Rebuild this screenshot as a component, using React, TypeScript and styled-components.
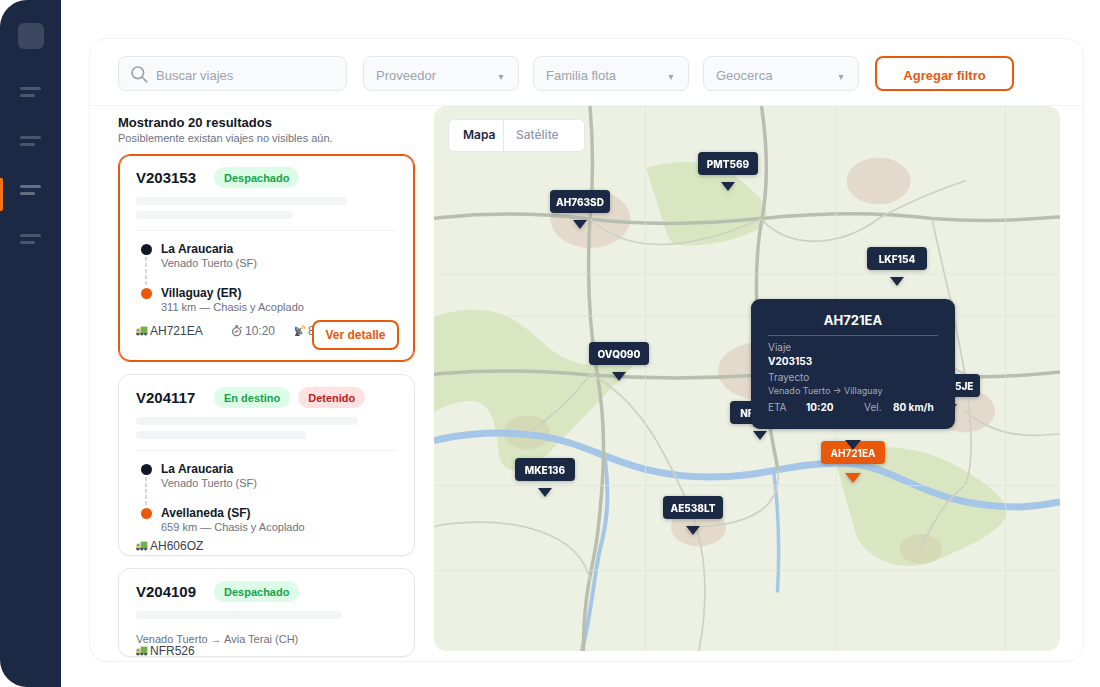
import React from "react";
import styled, { createGlobalStyle, css } from "styled-components";

const navy = "#1b2944";
const orange = "#ea580c";
const ink = "#111827";
const muted = "#6b7280";
const faint = "#9ca3af";
const line = "#e5e7eb";
const sans = `"Liberation Sans", Arial, sans-serif`;
const inter = `Inter, "Liberation Sans", sans-serif`;

const GlobalStyle = createGlobalStyle`
  *, *::before, *::after { box-sizing: border-box; }
  body { margin: 0; background: #fff; font-family: ${sans}; color: ${ink}; }
  button, input, select { font: inherit; color: inherit; margin: 0; }
  h1, h2, h3, p, ul, dl, dd { margin: 0; padding: 0; }
  ul { list-style: none; }
`;

const Shell = styled.div`
  display: flex;
  min-height: 100vh;
`;

const Sidebar = styled.nav`
  flex: 0 0 61px;
  display: flex;
  flex-direction: column;
  align-items: stretch;
  padding-top: 23px;
  background: ${navy};
  border-radius: 27px 0 0 27px;
  overflow: hidden;
`;

const Logo = styled.div`
  width: 26px;
  height: 26px;
  margin: 0 18px 26px;
  border-radius: 6px;
  background: rgba(255, 255, 255, 0.15);
`;

const NavButton = styled.button<{ $active?: boolean }>`
  position: relative;
  display: flex;
  flex-direction: column;
  justify-content: center;
  gap: 4px;
  height: 33px;
  margin-bottom: 16px;
  padding: 0 20px;
  border: 0;
  background: none;
  opacity: ${(p) => (p.$active ? 1 : 0.66)};

  &::before, &::after {
    content: "";
    width: 21px;
    height: 3px;
    border-radius: 2px;
    background: rgba(255, 255, 255, 0.32);
  }
  &::after { width: 15px; }
`;

const ActiveMark = styled.span`
  position: absolute;
  left: 0;
  top: 5px;
  width: 3px;
  height: 33px;
  border-radius: 0 2px 2px 0;
  background: #f97316;
`;

const Main = styled.main`
  flex: 1;
  min-width: 0;
  display: flex;
  padding: 38px 16px 25px 28px;
`;

const Panel = styled.section`
  flex: 1;
  min-width: 0;
  display: flex;
  flex-direction: column;
  border: 1px solid #f1f2f4;
  border-radius: 18px;
`;

const Toolbar = styled.form`
  display: flex;
  gap: 16px;
  padding: 17px 28px 14px;
  border-bottom: 1px solid #f1f2f4;
`;

const SearchBox = styled.label`
  flex: 0 1 229px;
  min-width: 0;
  height: 35px;
  display: flex;
  align-items: center;
  gap: 8px;
  padding: 2px 12px 0;
  border: 1px solid ${line};
  border-radius: 8px;
  background: #f9fafb;
`;

const SearchInput = styled.input`
  flex: 1;
  min-width: 0;
  padding: 2px 0 0;
  border: 0;
  outline: 0;
  background: none;
  font-size: 13px;
  &::placeholder { color: ${faint}; opacity: 1; }
`;

const Filters = styled.div`
  display: flex;
  gap: 14px;
  min-width: 0;
`;

const SelectBox = styled.div`
  position: relative;
  flex: 0 1 156px;
  min-width: 0;
`;

const Select = styled.select`
  width: 156px;
  max-width: 100%;
  height: 35px;
  padding: 4px 24px 0 12px;
  border: 1px solid ${line};
  border-radius: 8px;
  background: #f9fafb;
  color: ${faint};
  font-size: 13px;
  appearance: none;
`;

const Caret = styled.svg`
  position: absolute;
  right: 15px;
  top: 19px;
  pointer-events: none;
`;

const OutlineButton = styled.button<{ $small?: boolean }>`
  border: 2px solid ${orange};
  border-radius: 8px;
  background: #fff;
  color: ${orange};
  font-weight: 700;
  ${(p) =>
    p.$small
      ? css`
          position: absolute;
          right: 15px;
          bottom: 11px;
          width: 87px;
          height: 30px;
          font-size: 12px;
        `
      : css`
          flex: 0 0 139px;
          height: 35px;
          padding-top: 4px;
          font-size: 13px;
        `}
`;

const Body = styled.div`
  flex: 1;
  display: flex;
  gap: 19px;
  padding: 0 23px 0 28px;
`;

const List = styled.div`
  flex: 0 0 297px;
  padding: 9px 0 4px;
`;

const ListTitle = styled.h1`
  font-size: 13px;
  line-height: 16px;
`;

const ListNote = styled.p`
  margin-bottom: 9px;
  font-size: 11px;
  line-height: 14px;
  color: ${muted};
`;

const Cards = styled.ul`
  display: flex;
  flex-direction: column;
  gap: 12px;
`;

const Card = styled.li<{ $selected?: boolean; $bottom: number }>`
  position: relative;
  padding: 12px 17px ${(p) => p.$bottom}px;
  border: 1px solid ${(p) => (p.$selected ? orange : line)};
  border-radius: 12px;
  background: #fff;
  box-shadow: ${(p) =>
    p.$selected ? `inset 0 0 0 1px ${orange}` : "0 1px 1px rgba(17, 24, 39, 0.04)"};
`;

const CardHead = styled.div`
  display: flex;
  align-items: center;
  height: 21px;
  gap: 8px;
  margin-bottom: 9px;
`;

const TripId = styled.h2`
  flex: 0 0 70px;
  font-size: 15px;
  line-height: 21px;
`;

const Badge = styled.span<{ $danger?: boolean }>`
  padding: 1px 10px 0;
  border-radius: 11px;
  font-size: 11px;
  font-weight: 700;
  line-height: 20px;
  color: ${(p) => (p.$danger ? "#b91c1c" : "#16a34a")};
  background: ${(p) => (p.$danger ? "#fee2e2" : "#dcfce7")};
`;

const Skeleton = styled.div<{ $width: number }>`
  width: ${(p) => p.$width}%;
  height: 8px;
  border-radius: 4px;
  background: #f3f4f6;
  & + & { margin-top: 6px; }
`;

const Stops = styled.ul`
  margin-top: 11px;
  padding-top: 11px;
  border-top: 1px solid #f3f4f6;
`;

const Stop = styled.li`
  display: flex;
  gap: 5px;
  &:not(:last-child) > div:last-child { padding-bottom: 16px; }
`;

const Track = styled.div`
  flex: 0 0 20px;
  display: flex;
  flex-direction: column;
  align-items: center;
  padding-top: 2px;
`;

const Dot = styled.span<{ $end?: boolean }>`
  width: 11px;
  height: 11px;
  border-radius: 50%;
  background: ${(p) => (p.$end ? orange : ink)};
`;

const Dashes = styled.span`
  flex: 1;
  width: 2px;
  margin-top: 2px;
  background: repeating-linear-gradient(#d5d8de 0 4px, transparent 4px 6px);
`;

const StopName = styled.h3`
  font-size: 12px;
  line-height: 14px;
`;

const Detail = styled.p`
  font-size: 11px;
  line-height: 14px;
  color: ${muted};
`;

const RouteLine = styled(Detail)`
  margin-top: 13px;
`;

const Meta = styled.div<{ $top: number; $line: number }>`
  display: flex;
  margin-top: ${(p) => p.$top}px;
  font-size: 12px;
  line-height: ${(p) => p.$line}px;
  color: ${muted};
  white-space: nowrap;
`;

const MetaItem = styled.span<{ $width?: number; $strong?: boolean }>`
  display: flex;
  align-items: center;
  gap: 2px;
  flex: 0 0 ${(p) => (p.$width ? `${p.$width}px` : "auto")};
  color: ${(p) => (p.$strong ? "#374151" : muted)};
`;

const MapArea = styled.section`
  position: relative;
  flex: 1;
  min-width: 0;
  margin-bottom: 10px;
  border-radius: 13px;
  overflow: hidden;
  background: #edf1e4;
  font-family: ${inter};
`;

const Terrain = styled.svg`
  position: absolute;
  inset: 0;
  width: 100%;
  height: 100%;
`;

const Toggle = styled.div`
  position: absolute;
  left: 14px;
  top: 13px;
  display: flex;
  width: 137px;
  height: 33px;
  border: 1px solid ${line};
  border-radius: 6px;
  background: #fff;
`;

const ToggleButton = styled.button<{ $on?: boolean }>`
  flex: ${(p) => (p.$on ? "0 0 55px" : "1")};
  padding: 0 ${(p) => (p.$on ? 0 : 12)}px 3px ${(p) => (p.$on ? 14 : 12)}px;
  border: 0;
  border-right: ${(p) => (p.$on ? `1px solid ${line}` : "0")};
  background: none;
  text-align: left;
  font-size: 12px;
  font-weight: ${(p) => (p.$on ? 600 : 500)};
  color: ${(p) => (p.$on ? navy : "#8f99aa")};
`;

const Pin = styled.button<{ $active?: boolean }>`
  position: absolute;
  transform: translateX(-50%);
  display: flex;
  flex-direction: column;
  align-items: center;
  gap: ${(p) => (p.$active ? 9 : 7)}px;
  padding: 0;
  border: 0;
  background: none;
  color: ${(p) => (p.$active ? orange : navy)};
  filter: drop-shadow(0 1px 2px rgba(0, 0, 0, 0.25));
`;

const Plate = styled.span<{ $active?: boolean }>`
  width: ${(p) => (p.$active ? 64 : 60)}px;
  height: 23px;
  border-radius: 4px;
  background: currentColor;
  font-size: 10px;
  font-weight: ${(p) => (p.$active ? 700 : 800)};
  line-height: 25px;
  text-align: center;
  & > b { color: #fff; font-weight: inherit; }
`;

const Arrow = styled.span<{ $size: number }>`
  border: ${(p) => p.$size}px solid transparent;
  border-top: ${(p) => p.$size + 2}px solid currentColor;
  border-bottom: 0;
`;

const Popup = styled.div`
  position: absolute;
  transform: translateX(-50%);
  display: flex;
  flex-direction: column;
  align-items: center;
  gap: 11px;
  color: ${navy};
`;

const PopupCard = styled.div`
  width: 204px;
  padding: 12px 17px 15px;
  border-radius: 9px;
  background: ${navy};
  color: #a3abb9;
  font-size: 10px;
  line-height: 14px;
  box-shadow: 0 1px 4px rgba(0, 0, 0, 0.3);
  & h2 {
    margin-bottom: 4px;
    padding-bottom: 5px;
    border-bottom: 1px solid rgba(255, 255, 255, 0.25);
    font-size: 13px;
    font-weight: 700;
    line-height: 19px;
    text-align: center;
    color: #fff;
  }
  & strong { color: #fff; font-weight: 700; }
`;

const Field = styled.div`
  margin-bottom: 2px;
  & > * { display: block; }
  & > small { font-size: 9px; }
`;

const Metrics = styled.div`
  display: grid;
  grid-template-columns: 38px 58px 29px auto;
`;

type Place = { id: string; x: number; y: number; active?: boolean };

const places: Place[] = [
  { id: "PMT569", x: 728, y: 152 },
  { id: "AH763SD", x: 580, y: 190 },
  { id: "LKF154", x: 897, y: 247 },
  { id: "OVQ090", x: 619, y: 342 },
  { id: "AD345JE", x: 950, y: 374 },
  { id: "NFR526", x: 760, y: 401 },
  { id: "MKE136", x: 545, y: 458 },
  { id: "AE538LT", x: 693, y: 496 },
  { id: "AH721EA", x: 853, y: 441, active: true },
];

// Map coordinates to a share of the map's own width and height.
const at = (x: number, y: number) => ({
  left: `${((x - 434) / 626) * 100}%`,
  top: `${((y - 106) / 545) * 100}%`,
});

const Glyph = styled.svg`
  flex: 0 0 12px;
`;

function Truck() {
  return (
    <Glyph width="12" height="10" viewBox="0 0 12 10" aria-hidden="true">
      <path d="M4.600.6h6.800v6.600H4.600Z" fill="#6fb14a" />
      <path d="M1 2.400h3.300v5.400H.2V4.900Z" fill="#f3c64b" />
      <path d="M1.200 3h1.900v2.100H.5Z" fill="#5b9bc9" />
      <path d="M0 6.900h11.500v1.300H0Z" fill="#6d7a80" />
      <g fill="#48545b">
        <circle cx="1.900" cy="8.300" r="1.300" />
        <circle cx="5.800" cy="8.300" r="1.300" />
        <circle cx="9.600" cy="8.300" r="1.300" />
      </g>
    </Glyph>
  );
}

function Stopwatch() {
  return (
    <Glyph width="12" height="12" viewBox="0 0 12 12" fill="none" aria-hidden="true">
      <path d="M4.300.9h2.700M5.600 1v1.500M9.400 2l1.200 1.100" stroke="#64727a" strokeWidth="1.300" />
      <circle cx="5.600" cy="6.700" r="4" fill="#f5f6f7" stroke="#75828a" strokeWidth="1.300" />
      <path d="M4.100 7.500L7.400 5.400" stroke="#d8463f" strokeWidth="1.100" />
    </Glyph>
  );
}

function Satellite() {
  return (
    <Glyph width="12" height="12" viewBox="0 0 12 12" fill="none" aria-hidden="true">
      <path d="M1.200 1.500C-.2 5.600 3.200 10 8.600 9.200Z" fill="#57666f" />
      <path d="M1.200 1.500C4 1.400 8.600 6 8.600 9.200C5.600 8.900 1.700 4.900 1.200 1.500Z" fill="#84939b" />
      <path d="M2.200 7.500L1 11h5L4.500 8.700Z" fill="#46545c" />
      <path d="M4.500 5.600L7.200 3.400" stroke="#46545c" strokeWidth="1.200" />
      <path d="M7.200 2.200Q8.700 2.400 8.900 4M7.700.5Q10.600.9 10.900 3.900" stroke="#f5b04c" strokeWidth="1.100" />
    </Glyph>
  );
}

function MapDrawing() {
  return (
    <Terrain viewBox="434 106 626 545" preserveAspectRatio="none" aria-hidden="true">
      <rect x="434" y="106" width="626" height="545" fill="#edf1e4" />
      <g fill="#dae6c2">
        <path d="M646 168Q700 153 735 176Q755 191 764 203Q772 222 755 231Q722 246 685 245.500Q671 246 667 235Z" />
        <path d="M434 317C456 308 490 306 512 319C543 336 552 364 596 365Q616 366 634 365L545 457Q528 470 512 470Q500 469 498 448C496 425 492 401 470 401Q453 401 434 412Z" />
        <path d="M832 449C880 445 905 446 935 456C965 468 1006 494 1007 511C1006 532 962 548 940 559C903 574 873 563 857 538Z" />
      </g>
      <g fill="#e3dacb">
        <ellipse cx="590.500" cy="219" rx="40" ry="29" />
        <ellipse cx="878.500" cy="181" rx="32" ry="23.500" />
        <ellipse cx="761" cy="371" rx="43" ry="29" />
        <ellipse cx="965" cy="411" rx="30" ry="21.500" />
        <ellipse cx="698.500" cy="527" rx="27.500" ry="19.500" />
      </g>
      <g fill="#d5d9b5">
        <ellipse cx="527" cy="432.500" rx="23" ry="17" />
        <ellipse cx="921" cy="549" rx="21" ry="15" />
      </g>
      <g fill="none" stroke="#a6c6e8">
        <path strokeWidth="7" d="M434 441L441 439C480 431 530 430 570 443C604 453 640 477 710 477C765 477 790 463 838 463C900 463 920 507 1020 507Q1040 506 1060 502" />
        <path strokeWidth="4" d="M605 459Q611 505 602 541C594 570 594 600 582 651" />
        <path strokeWidth="3.500" strokeLinecap="round" d="M774 474Q781 530 777.500 591" />
      </g>
      <g fill="none" stroke="#b9bfae" strokeWidth="3.500">
        <path d="M434 218.500L441 217.500Q516 210 590 219T761 218.500Q858 209 932 218.500Q990 223 1050 217.500L1060 217" />
        <path d="M434 374.500L441 373.500Q516 368 590 375Q675 381 761 375Q860 370 932 375.500Q990 379 1050 373L1060 372" />
        <path d="M590 106Q595 165 590 219C587 270 589 325 597 372C605 420 606 460 598 530C595 562 583 590 583.500 651" />
        <path d="M761.500 106Q771 170 762 219C754 260 755 320 762 375Q768 420 778 470" />
      </g>
      <g fill="none" stroke="#cdd1c5" strokeWidth="1.700">
        <path d="M590 219Q645 270 761 219C790 250 840 248 881 217Q920 196 966 180.500" />
        <path d="M932 219Q941 260 952 306L965 374Q977 460 965 485Q938 507 921 549" />
        <path d="M940 361L965 374M965 411Q998 440 1050 434.500L1060 434" />
        <path d="M434 526.500L441 525C515 515 580 533 590.500 581" />
        <path d="M527 432.500Q562 412 590.500 374C640 400 665 453 684 495Q716 560 699 651" />
        <path d="M698 527C745 525 782 510 778 470" />
      </g>
      <g fill="none" stroke="#dfe4d5" strokeWidth="1" opacity="0.7">
        <path d="M645.500 106V651M836 106V651M1005.500 106V651" />
        <path d="M434 274H1060M434 316H1060M434 485.500H1060M434 570.500H1060" />
      </g>
    </Terrain>
  );
}

function FilterSelect({ name }: { name: string }) {
  return (
    <SelectBox>
      <Select aria-label={name} defaultValue="">
        <option value="">{name}</option>
      </Select>
      <Caret width="6" height="5" viewBox="0 0 6 5" fill={faint}>
        <path d="M.5 0h5L3 5Z" />
      </Caret>
    </SelectBox>
  );
}

function Route({ from, fromNote, to, toNote }: Record<"from" | "fromNote" | "to" | "toNote", string>) {
  return (
    <Stops>
      <Stop>
        <Track>
          <Dot />
          <Dashes />
        </Track>
        <div>
          <StopName>{from}</StopName>
          <Detail>{fromNote}</Detail>
        </div>
      </Stop>
      <Stop>
        <Track>
          <Dot $end />
        </Track>
        <div>
          <StopName>{to}</StopName>
          <Detail>{toNote}</Detail>
        </div>
      </Stop>
    </Stops>
  );
}

export default function App() {
  return (
    <>
      <GlobalStyle />
      <Shell>
        <Sidebar aria-label="Principal">
          <Logo />
          <NavButton type="button" aria-label="Inicio" />
          <NavButton type="button" aria-label="Flota" />
          <NavButton type="button" aria-label="Viajes" $active>
            <ActiveMark />
          </NavButton>
          <NavButton type="button" aria-label="Informes" />
        </Sidebar>
        <Main>
          <Panel>
            <Toolbar onSubmit={(e) => e.preventDefault()}>
              <SearchBox>
                <svg width="17" height="17" viewBox="0 0 17 17" fill="none" stroke={faint} strokeWidth="1.700" strokeLinecap="round">
                  <circle cx="6.800" cy="6.800" r="5.800" />
                  <path d="M11 11l4.800 4.800" />
                </svg>
                <SearchInput type="text" placeholder="Buscar viajes" aria-label="Buscar viajes" />
              </SearchBox>
              <Filters>
                <FilterSelect name="Proveedor" />
                <FilterSelect name="Familia flota" />
                <FilterSelect name="Geocerca" />
              </Filters>
              <OutlineButton type="button">Agregar filtro</OutlineButton>
            </Toolbar>
            <Body>
              <List>
                <ListTitle>Mostrando 20 resultados</ListTitle>
                <ListNote>Posiblemente existan viajes no visibles aún.</ListNote>
                <Cards>
                  <Card $selected $bottom={22}>
                    <CardHead>
                      <TripId>V203153</TripId>
                      <Badge>Despachado</Badge>
                    </CardHead>
                    <Skeleton $width={81} />
                    <Skeleton $width={60} />
                    <Route from="La Araucaria" fromNote="Venado Tuerto (SF)" to="Villaguay (ER)" toNote="311 km — Chasis y Acoplado" />
                    <Meta $top={9} $line={16}>
                      <MetaItem $strong $width={95}>
                        <Truck />
                        AH721EA
                      </MetaItem>
                      <MetaItem $width={63}>
                        <Stopwatch />
                        10:20
                      </MetaItem>
                      <MetaItem>
                        <Satellite />
                        80 km/h
                      </MetaItem>
                    </Meta>
                    <OutlineButton type="button" $small>
                      Ver detalle
                    </OutlineButton>
                  </Card>
                  <Card $bottom={1}>
                    <CardHead>
                      <TripId>V204117</TripId>
                      <Badge>En destino</Badge>
                      <Badge $danger>Detenido</Badge>
                    </CardHead>
                    <Skeleton $width={85} />
                    <Skeleton $width={65} />
                    <Route from="La Araucaria" fromNote="Venado Tuerto (SF)" to="Avellaneda (SF)" toNote="659 km — Chasis y Acoplado" />
                    <Meta $top={4} $line={16}>
                      <MetaItem $strong>
                        <Truck />
                        AH606OZ
                      </MetaItem>
                    </Meta>
                  </Card>
                  <Card $bottom={0}>
                    <CardHead>
                      <TripId>V204109</TripId>
                      <Badge>Despachado</Badge>
                    </CardHead>
                    <Skeleton $width={79} />
                    <RouteLine>Venado Tuerto → Avia Terai (CH)</RouteLine>
                    <Meta $top={0} $line={10}>
                      <MetaItem $strong>
                        <Truck />
                        NFR526
                      </MetaItem>
                    </Meta>
                  </Card>
                </Cards>
              </List>
              <MapArea aria-label="Mapa de viajes">
                <MapDrawing />
                <Toggle>
                  <ToggleButton type="button" $on>
                    Mapa
                  </ToggleButton>
                  <ToggleButton type="button">Satélite</ToggleButton>
                </Toggle>
                {places.map((p) => (
                  <Pin key={p.id} type="button" $active={p.active} style={at(p.x, p.y)}>
                    <Plate $active={p.active}>
                      <b>{p.id}</b>
                    </Plate>
                    <Arrow $size={p.active ? 8 : 7} />
                  </Pin>
                ))}
                <Popup style={at(853, 299)}>
                  <PopupCard>
                    <h2>AH721EA</h2>
                    <Field>
                      <span>Viaje</span>
                      <strong>V203153</strong>
                    </Field>
                    <Field>
                      <span>Trayecto</span>
                      <small>Venado Tuerto → Villaguay</small>
                    </Field>
                    <Metrics>
                      <span>ETA</span>
                      <strong>10:20</strong>
                      <span>Vel.</span>
                      <strong>80 km/h</strong>
                    </Metrics>
                  </PopupCard>
                  <Arrow $size={8} />
                </Popup>
              </MapArea>
            </Body>
          </Panel>
        </Main>
      </Shell>
    </>
  );
}
